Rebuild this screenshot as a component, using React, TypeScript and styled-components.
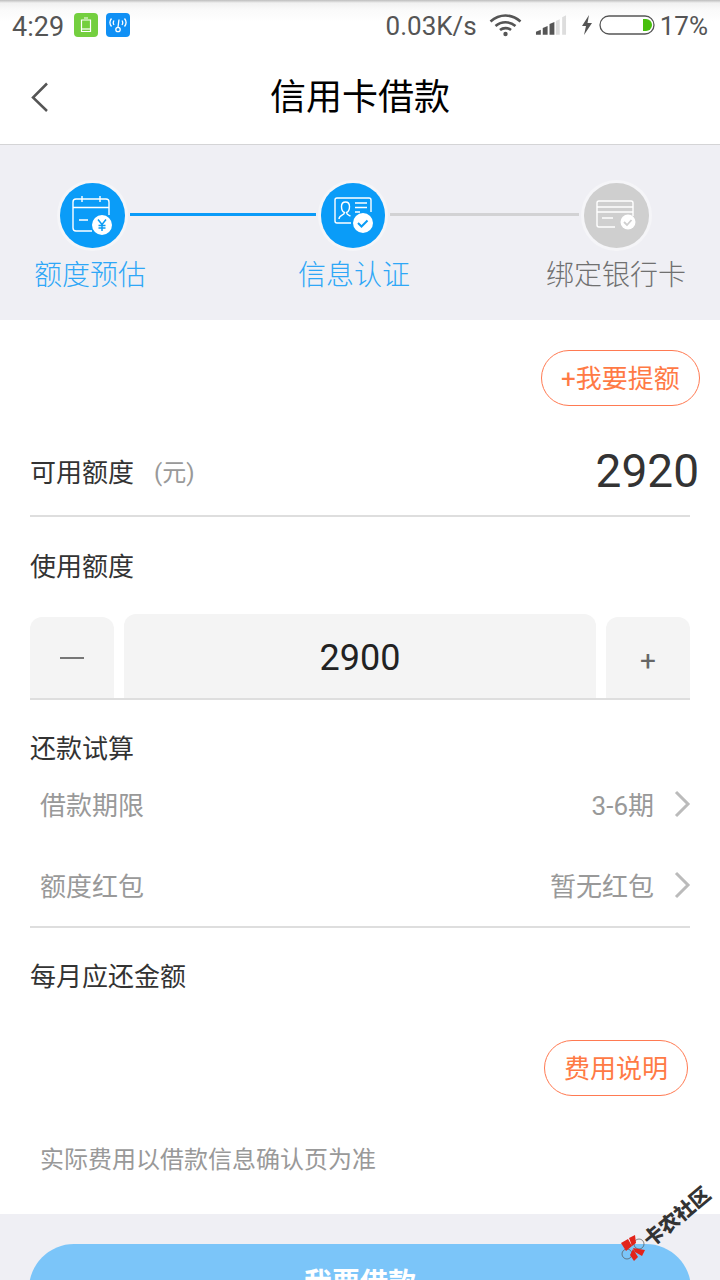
import React from 'react';
import styled, { createGlobalStyle } from 'styled-components';

const GlobalStyle = createGlobalStyle`
  html, body {
    margin: 0;
    padding: 0;
    background: #fff;
  }
  * {
    box-sizing: border-box;
  }
`;

const CalendarIcon = () => (
  <svg width="64" height="64" viewBox="0 0 64 64" fill="none" stroke="#fff" strokeWidth="1.4">
    <path d="M32 48H16a3 3 0 0 1-3-3V19a3 3 0 0 1 3-3h30a3 3 0 0 1 3 3v13" />
    <path d="M13 24.500h36M22 13v6M40 13v6M19 37h9" />
    <circle cx="42" cy="42" r="10" fill="#fff" stroke="none" />
    <path d="M38 36.500l4 5 4-5M42 41.500v6.500M38.500 42.500h7M38.500 45h7" stroke="#0a9cf5" strokeWidth="1.500" />
  </svg>
);

const IdCardIcon = () => (
  <svg width="64" height="64" viewBox="0 0 64 64" fill="none" stroke="#fff" strokeWidth="1.4">
    <path d="M30 40H16a2 2 0 0 1-2-2V17a2 2 0 0 1 2-2h32a2 2 0 0 1 2 2v12" />
    <path d="M18 36c0-4 5.500-3.500 5.500-6.500-2.500-1-3-3-3-6 0-3 2-4.500 4-4.500s4 1.500 4 4.500c0 3-.5 5-3 6 0 2 2 2.500 4 3.500" />
    <path d="M34 20h12M34 24.500h12M34 29h5" />
    <circle cx="42" cy="40" r="10" fill="#fff" stroke="none" />
    <path d="M37 40l3.500 3.500 6-6" stroke="#0a9cf5" strokeWidth="2" />
  </svg>
);

const BankCardIcon = () => (
  <svg width="64" height="64" viewBox="0 0 64 64" fill="none" stroke="#fff" strokeWidth="1.4">
    <path d="M31 44H15a2 2 0 0 1-2-2V20a2 2 0 0 1 2-2h32a2 2 0 0 1 2 2v13" />
    <path d="M13 24h36M13 29h36M18 35h11" />
    <circle cx="44" cy="39" r="7.500" fill="#fff" stroke="none" />
    <path d="M40 39l3 3 4.500-5" stroke="#cfcfcf" strokeWidth="1.800" />
  </svg>
);

const WatermarkLogo = () => (
  <svg width="26" height="27" viewBox="0 0 26 27">
    <circle cx="19" cy="9" r="5" fill="none" stroke="#555" strokeWidth="0.7" />
    <circle cx="7" cy="19" r="5" fill="none" stroke="#555" strokeWidth="0.7" />
    <path d="M1 8l7-4 4 7-6 5zM9 3l6-3 1 8-4 3zM13 13l12 2-3 6-7-4zM13 14l5 8-4 4-4-6z" fill="#e2231a" />
  </svg>
);

const OptionChevron = () => (
  <Chevron width="18" height="28" viewBox="0 0 18 28" fill="none">
    <path d="M3 2l12 12L3 26" stroke="#bbb" strokeWidth="3" />
  </Chevron>
);

const App: React.FC = () => {
  return (
    <Page>
      <GlobalStyle />
      <StatusBar>
        <StatusTime>4:29</StatusTime>
        <AppBadge $color="#74cf3f">
          <svg width="12" height="16" viewBox="0 0 12 16" fill="none" stroke="#fff" strokeWidth="1.200">
            <path d="M4 1h4M1.500 3h9v11.500h-9z" />
            <path d="M2 12h8" />
          </svg>
        </AppBadge>
        <AppBadge $color="#1090f5">
          <svg width="20" height="18" viewBox="0 0 20 18" fill="none" stroke="#fff" strokeWidth="1.300">
            <path d="M3.500 2.500c-2 2.500-2 5.500 0 8M16.500 2.500c2 2.500 2 5.500 0 8M6 4.500c-1 1.500-1 3 0 4.500M14 4.500c1 1.500 1 3 0 4.500" />
            <path d="M11 3.500L10 11" />
            <circle cx="10" cy="13.500" r="2.200" />
          </svg>
        </AppBadge>
        <StatusRight>
          <StatusText>0.03K/s</StatusText>
          <WifiIcon width="33" height="24" viewBox="0 0 33 24" fill="none" stroke="#555" strokeWidth="2.600">
            <path d="M1.500 8.500c9-8 21-8 30 0M6.500 13c6-5 14-5 20 0M11 17c3-2.500 8-2.500 11 0" />
            <circle cx="16.500" cy="21" r="2.200" fill="#555" stroke="none" />
          </WifiIcon>
          <SignalIcon width="32" height="22" viewBox="0 0 33 22">
            <path d="M1 21v-3l5-2v5zM8 21v-7l5-2v9zM15 21V10l5-2v13z" fill="#555" />
            <path d="M21.500 21V7l4-2v16zM28 21V3l4-2v20z" fill="#ddd" />
          </SignalIcon>
          <BoltIcon width="12" height="20" viewBox="1 0 10 20">
            <path d="M8 0L1 11h4l-2 9 8-12H6.500z" fill="#555" />
          </BoltIcon>
          <BatteryIcon width="56" height="20" viewBox="0 0 56 20">
            <rect x="1" y="1" width="54" height="18" rx="9" fill="none" stroke="#555" strokeWidth="1.300" />
            <path d="M44 4h3a6 6 0 0 1 0 12h-3z" fill="#47bf0c" />
          </BatteryIcon>
          <StatusText>17%</StatusText>
        </StatusRight>
      </StatusBar>

      <NavBar>
        <BackIcon width="20" height="32" viewBox="0 0 20 32" fill="none">
          <path d="M17 2.500L3 16.500l14 13.500" stroke="#555" strokeWidth="2.500" />
        </BackIcon>
        <NavTitle>信用卡借款</NavTitle>
      </NavBar>

      <Steps>
        <StepTrack>
          <StepCircle $done>
            <CalendarIcon />
          </StepCircle>
          <StepLine $done $width={186} />
          <StepCircle $done>
            <IdCardIcon />
          </StepCircle>
          <StepLine $width={189} />
          <StepCircle>
            <BankCardIcon />
          </StepCircle>
        </StepTrack>
        <StepLabels>
          <StepLabel $done>额度预估</StepLabel>
          <StepLabel $done>信息认证</StepLabel>
          <StepLabel>绑定银行卡</StepLabel>
        </StepLabels>
      </Steps>

      <Content>
        <RaiseRow>
          <OutlineButton $width={159}>+我要提额</OutlineButton>
        </RaiseRow>
        <AvailableRow>
          <Label>可用额度</Label>
          <Unit>(元)</Unit>
          <Amount>2920</Amount>
        </AvailableRow>
        <UseLabelRow>
          <Label>使用额度</Label>
        </UseLabelRow>
        <Stepper>
          <StepperKey>
            <MinusBar />
          </StepperKey>
          <StepperValue>2900</StepperValue>
          <StepperKey>
            <PlusMark>+</PlusMark>
          </StepperKey>
        </Stepper>
        <RepayHeading>
          <Label>还款试算</Label>
        </RepayHeading>
        <OptionList>
          <OptionRow>
            <OptionName>借款期限</OptionName>
            <OptionValue>3-6期</OptionValue>
            <OptionChevron />
          </OptionRow>
          <OptionRow>
            <OptionName>额度红包</OptionName>
            <OptionValue>暂无红包</OptionValue>
            <OptionChevron />
          </OptionRow>
        </OptionList>
        <MonthlyHeading>
          <Label>每月应还金额</Label>
        </MonthlyHeading>
        <FeeRow>
          <OutlineButton $width={144}>费用说明</OutlineButton>
        </FeeRow>
        <Note>实际费用以借款信息确认页为准</Note>
      </Content>

      <Footer>
        <SubmitButton>我要借款</SubmitButton>
      </Footer>

      <Watermark>
        <WatermarkLogo />
        <WatermarkText>卡农社区</WatermarkText>
      </Watermark>
    </Page>
  );
};

const Page = styled.div`
  position: relative;
  width: 720px;
  height: 1280px;
  overflow: hidden;
  background: #fff;
  font-family: Roboto, 'Noto Sans CJK SC', sans-serif;
`;

const StatusBar = styled.div`
  display: flex;
  align-items: center;
  height: 52px;
  padding: 0 12px 2px;
  background: linear-gradient(#bdbdbd 0, #f1f1f1 3px, #fafafa 10px, #fff 22px);
  color: #555;
`;

const StatusTime = styled.span`
  width: 62px;
  margin-top: 3px;
  font-size: 27px;
`;

const AppBadge = styled.div<{ $color: string }>`
  display: flex;
  align-items: center;
  justify-content: center;
  width: 24px;
  height: 24px;
  margin-right: 8px;
  border-radius: 4px;
  background: ${(p) => p.$color};
`;

const StatusRight = styled.div`
  display: flex;
  align-items: center;
  margin-left: auto;
`;

const StatusText = styled.span`
  margin-top: 2px;
  font-size: 26px;
  color: #555;
`;

const WifiIcon = styled.svg`
  margin-left: 12px;
`;

const SignalIcon = styled.svg`
  margin-left: 13px;
`;

const BoltIcon = styled.svg`
  margin-left: 14px;
`;

const BatteryIcon = styled.svg`
  margin: 0 5px 0 6px;
`;

const NavBar = styled.div`
  position: relative;
  display: flex;
  align-items: center;
  justify-content: center;
  height: 93px;
  padding-bottom: 8px;
  border-bottom: 1px solid #d4d4d6;
`;

const BackIcon = styled.svg`
  position: absolute;
  left: 30px;
  top: 29px;
`;

const NavTitle = styled.h1`
  margin: 0;
  font-size: 36px;
  font-weight: 400;
  color: #000;
`;

const Steps = styled.div`
  height: 175px;
  padding-top: 38px;
  background: #efeff4;
`;

const StepTrack = styled.div`
  display: flex;
  align-items: center;
  padding-left: 60px;
`;

const StepCircle = styled.div<{ $done?: boolean }>`
  flex: none;
  width: 64.5px;
  height: 64.5px;
  border-radius: 50%;
  background: ${(p) => (p.$done ? '#0a9cf8' : '#cfcfcf')};
  box-shadow: 0 0 0 3px #f5f5f8;
  svg {
    display: block;
  }
`;

const StepLine = styled.div<{ $done?: boolean; $width: number }>`
  flex: none;
  width: ${(p) => p.$width}px;
  height: 3px;
  margin: 0 5px 2px;
  background: ${(p) => (p.$done ? '#0b9bf8' : '#d2d2d4')};
`;

const StepLabels = styled.div`
  display: grid;
  grid-template-columns: 264px 262px 140px;
  padding: 8px 0 0 20px;
`;

const StepLabel = styled.div<{ $done?: boolean }>`
  width: 140px;
  font-size: 28px;
  line-height: 40px;
  text-align: center;
  font-weight: 300;
  color: ${(p) => (p.$done ? '#2ea7f7' : '#707070')};
`;

const Content = styled.div`
  height: 894px;
  padding: 30px 30px 0;
`;

const RaiseRow = styled.div`
  display: flex;
  justify-content: flex-end;
  margin-right: -10px;
`;

const OutlineButton = styled.div<{ $width: number }>`
  display: flex;
  align-items: center;
  justify-content: center;
  width: ${(p) => p.$width}px;
  height: 56px;
  padding-bottom: 4px;
  border: 1px solid #ff7a52;
  border-radius: 28px;
  font-size: 26px;
  color: #ff7a45;
`;

const AvailableRow = styled.div`
  display: flex;
  align-items: center;
  height: 111px;
  padding-top: 20px;
  border-bottom: 2px solid #dedede;
`;

const Label = styled.span`
  font-size: 26px;
  color: #333;
`;

const Unit = styled.span`
  margin-left: 20px;
  font-size: 24px;
  color: #999;
`;

const Amount = styled.span`
  margin-left: auto;
  margin-right: -9px;
  font-size: 46px;
  color: #333;
`;

const UseLabelRow = styled.div`
  display: flex;
  align-items: center;
  height: 97px;
  padding-bottom: 2px;
`;

const Stepper = styled.div`
  display: flex;
  align-items: flex-end;
  gap: 10px;
  height: 86px;
  border-bottom: 2px solid #dedede;
`;

const StepperKey = styled.div`
  display: flex;
  align-items: center;
  justify-content: center;
  width: 84px;
  height: 81px;
  border-radius: 12px 12px 0 0;
  background: #f4f4f4;
`;

const MinusBar = styled.div`
  width: 24px;
  height: 2px;
  background: #777;
`;

const PlusMark = styled.span`
  font-size: 28px;
  color: #666;
  margin-top: 6px;
`;

const StepperValue = styled.div`
  display: flex;
  align-items: center;
  justify-content: center;
  flex: 1;
  height: 84px;
  padding-top: 4px;
  border-radius: 12px 12px 0 0;
  background: #f4f4f4;
  font-size: 36px;
  color: #222;
`;

const RepayHeading = styled.div`
  display: flex;
  align-items: center;
  height: 98px;
  padding-bottom: 6px;
`;

const OptionList = styled.div`
  margin-top: -35px;
  padding-bottom: 1px;
  border-bottom: 2px solid #dedede;
`;

const OptionRow = styled.div`
  display: flex;
  align-items: center;
  height: 81px;
`;

const OptionName = styled.span`
  margin-left: 10px;
  font-size: 26px;
  color: #999;
`;

const OptionValue = styled.span`
  margin-left: auto;
  font-size: 26px;
  color: #999;
`;

const Chevron = styled.svg`
  margin: 0 -1px 0 19px;
`;

const MonthlyHeading = styled.div`
  display: flex;
  align-items: center;
  height: 98px;
  padding-bottom: 6px;
`;

const FeeRow = styled.div`
  display: flex;
  justify-content: flex-end;
  margin: 14px 2px 0 0;
`;

const Note = styled.div`
  margin: 44px 0 0 10px;
  font-size: 24px;
  line-height: 40px;
  color: #999;
`;

const Footer = styled.div`
  height: 66px;
  padding: 30px 29px 0;
  background: #efeff4;
`;

const SubmitButton = styled.div`
  height: 90px;
  border-radius: 45px;
  background: #7bc5f9;
  color: #fff;
  font-size: 28px;
  font-weight: 700;
  line-height: 80px;
  text-align: center;
`;

const Watermark = styled.div`
  position: absolute;
  left: 620px;
  top: 1235px;
  width: 26px;
  height: 27px;
`;

const WatermarkText = styled.span`
  position: absolute;
  left: 17px;
  top: -32px;
  width: 80px;
  font-size: 20px;
  line-height: 28px;
  font-weight: 900;
  color: #333;
  white-space: nowrap;
  transform: rotate(-40deg);
`;

export default App;
